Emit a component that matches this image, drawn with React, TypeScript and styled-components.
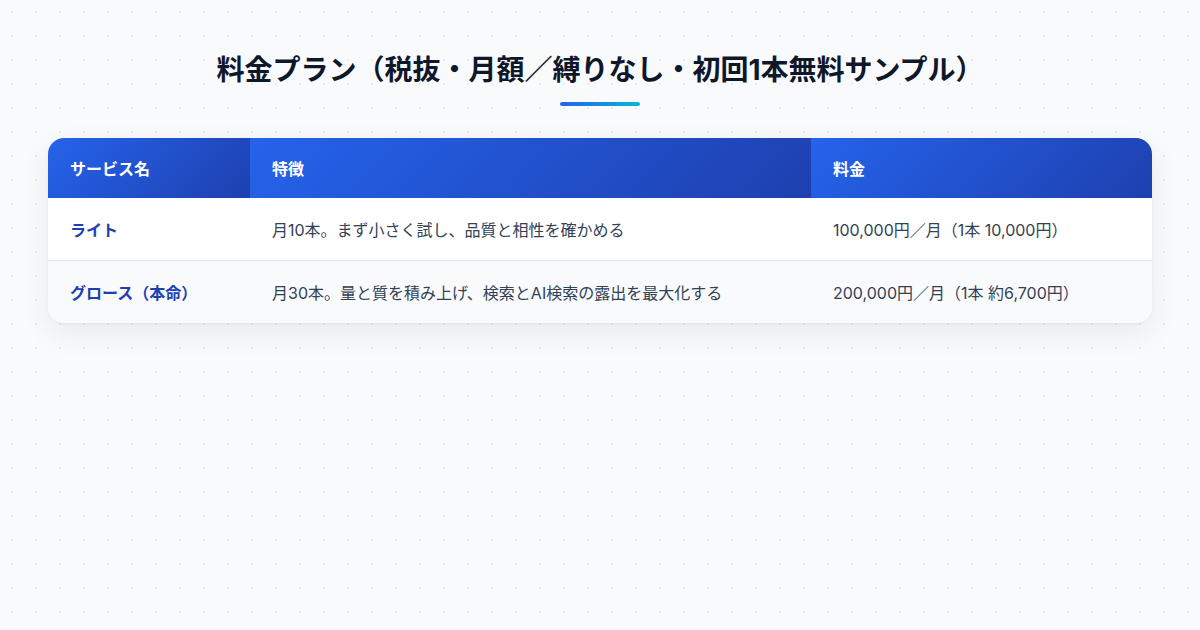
import styled, { createGlobalStyle } from "styled-components";

const GlobalStyle = createGlobalStyle`
  html, body {
    margin: 0;
    padding: 0;
  }
  body {
    width: 1200px;
    height: 630px;
    overflow: hidden;
    background-color: #f8fafc;
    background-image: radial-gradient(circle, #e8ebf0 1px, transparent 1.2px);
    background-size: 24px 24px;
    font-family: Inter, "Noto Sans CJK JP", sans-serif;
    color: #334155;
  }
`;

const Page = styled.div`
  display: flex;
  flex-direction: column;
  align-items: center;
  padding: 52px 48px 0;
`;

const Title = styled.h1`
  margin: 0;
  font-size: 28px;
  font-weight: 700;
  line-height: 36px;
  color: #0f172a;
`;

const TitleBar = styled.div`
  width: 80px;
  height: 4px;
  border-radius: 2px;
  margin-top: 14px;
  background: linear-gradient(90deg, #2563eb, #06b6d4);
`;

const Card = styled.div`
  width: 100%;
  margin-top: 32px;
  border-radius: 16px;
  overflow: hidden;
  background: #ffffff;
  box-shadow: 0 10px 30px rgba(15, 23, 42, 0.07), 0 1px 3px rgba(15, 23, 42, 0.04);
`;

const Table = styled.table`
  width: 100%;
  border-collapse: collapse;
  table-layout: fixed;
`;

const HeadCell = styled.th<{ $width: number }>`
  width: ${(p) => p.$width}px;
  height: 60px;
  padding: 0 22px;
  box-sizing: border-box;
  text-align: left;
  font-size: 16px;
  font-weight: 700;
  color: #ffffff;
  background: linear-gradient(135deg, #2563eb, #1e40af);
`;

const Row = styled.tr<{ $alt?: boolean }>`
  background: ${(p) => (p.$alt ? "#f8fafc" : "#ffffff")};
`;

const Cell = styled.td<{ $strong?: boolean; $divided?: boolean }>`
  height: ${(p) => (p.$divided ? 63 : 62)}px;
  padding: 0 22px;
  box-sizing: border-box;
  border-top: ${(p) => (p.$divided ? "1px solid #e2e8f0" : "none")};
  font-size: 16px;
  font-weight: ${(p) => (p.$strong ? 700 : 400)};
  color: ${(p) => (p.$strong ? "#1e40af" : "#334155")};
  white-space: nowrap;
`;

const plans = [
  {
    name: "ライト",
    feature: "月10本。まず小さく試し、品質と相性を確かめる",
    price: "100,000円／月（1本 10,000円）",
  },
  {
    name: "グロース（本命）",
    feature: "月30本。量と質を積み上げ、検索とAI検索の露出を最大化する",
    price: "200,000円／月（1本 約6,700円）",
  },
];

export default function App() {
  return (
    <>
      <GlobalStyle />
      <Page>
        <Title>料金プラン（税抜・月額／縛りなし・初回1本無料サンプル）</Title>
        <TitleBar />
        <Card>
          <Table>
            <thead>
              <tr>
                <HeadCell $width={202}>サービス名</HeadCell>
                <HeadCell $width={561}>特徴</HeadCell>
                <HeadCell $width={341}>料金</HeadCell>
              </tr>
            </thead>
            <tbody>
              {plans.map((plan, i) => (
                <Row key={plan.name} $alt={i % 2 === 1}>
                  <Cell $strong $divided={i > 0}>{plan.name}</Cell>
                  <Cell $divided={i > 0}>{plan.feature}</Cell>
                  <Cell $divided={i > 0}>{plan.price}</Cell>
                </Row>
              ))}
            </tbody>
          </Table>
        </Card>
      </Page>
    </>
  );
}
